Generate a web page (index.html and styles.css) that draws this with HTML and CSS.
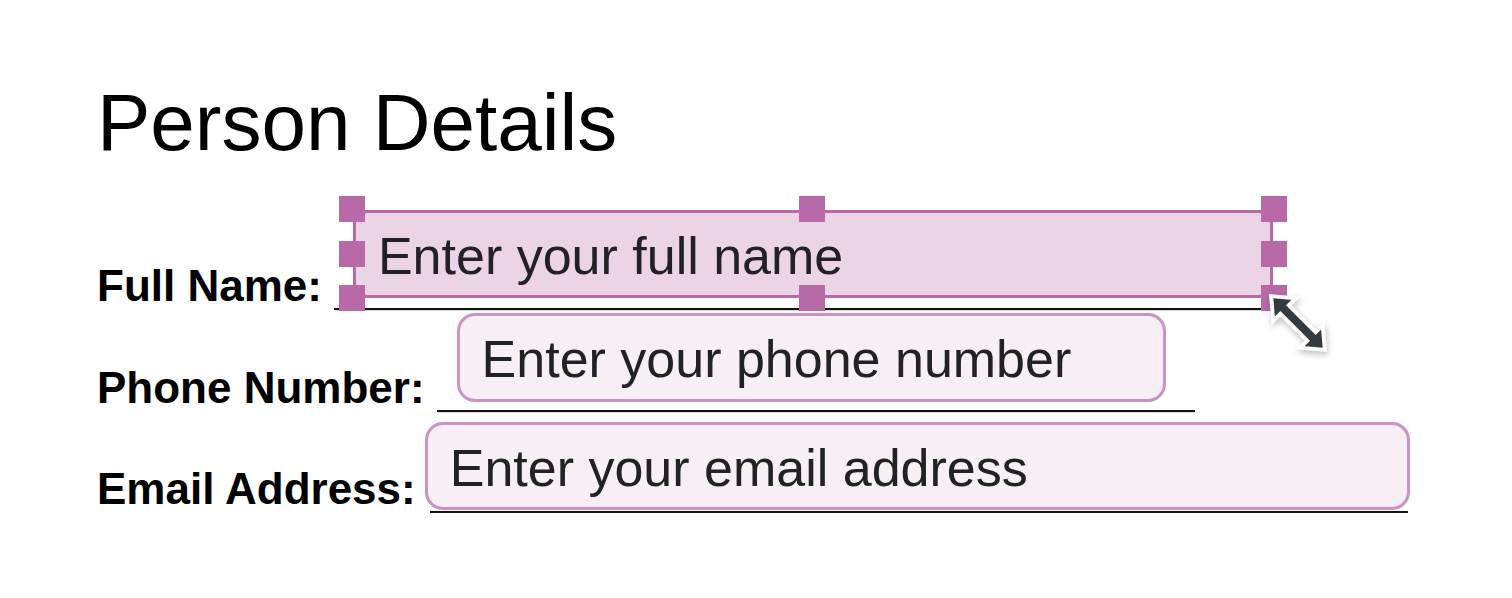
FILE: index.html
```html
<!DOCTYPE html>
<html>
<head>
    <link rel="stylesheet" href="styles.css">
</head>
<body>
    <div class="form">
        <h1 class="title">Person Details</h1>

        <div class="row row-name">
            <label class="label" for="fullName">Full Name:</label>
            <div class="field field-name">
                <div class="frame">
                    <input id="fullName" class="box box-selected" type="text" placeholder="Enter your full name">
                    <span class="handle h-tl"></span>
                    <span class="handle h-tm"></span>
                    <span class="handle h-tr"></span>
                    <span class="handle h-ml"></span>
                    <span class="handle h-mr"></span>
                    <span class="handle h-bl"></span>
                    <span class="handle h-bm"></span>
                    <span class="handle h-br"></span>
                    <svg class="resize-cursor" width="90" height="90" viewBox="0 0 90 90">
                        <polygon transform="translate(45 45) rotate(45)"
                            points="-38,0 -19,-16 -19,-6 19,-6 19,-16 38,0 19,16 19,6 -19,6 -19,16"
                            fill="#353a3e" stroke="#ffffff" stroke-width="4" stroke-linejoin="miter"/>
                    </svg>
                </div>
            </div>
        </div>

        <div class="row row-phone">
            <label class="label" for="phone">Phone Number:</label>
            <div class="field field-phone">
                <input id="phone" class="box" type="text" placeholder="Enter your phone number">
            </div>
        </div>

        <div class="row row-email">
            <label class="label" for="email">Email Address:</label>
            <div class="field field-email">
                <input id="email" class="box" type="text" placeholder="Enter your email address">
            </div>
        </div>
    </div>
</body>
</html>
```

FILE: styles.css
```css
body {
    margin: 0;
    background-color: #ffffff;
    color: #000000;
    font-family: "Liberation Sans", Arial, sans-serif;
    overflow: hidden;
}

.form {
    padding: 77px 0 0 97px;
}

.title {
    font-size: 80px;
    font-weight: normal;
    line-height: 91px;
    margin: 0 0 42px 0;
}

.row {
    display: flex;
    align-items: flex-end;
}

.row-phone {
    margin-top: 3px;
}

.row-email {
    margin-top: 10px;
}

.label {
    font-size: 44px;
    font-weight: bold;
    line-height: 48px;
}

.field {
    border-bottom: 2px solid #111111;
    box-shadow: 0 2px 0 -1px #d8d8d8;
}

.field-name {
    width: 927px;
    margin-left: 12px;
    padding-bottom: 10px;
}

.field-phone {
    width: 758px;
    margin-left: 12px;
    padding-bottom: 8px;
}

.field-email {
    width: 978px;
    margin-left: 14px;
    padding-bottom: 1px;
}

.box {
    display: block;
    box-sizing: border-box;
    height: 88px;
    padding: 3px 0 0 22px;
    border: 3px solid #cd92c3;
    border-radius: 18px;
    background-color: #f8eef5;
    color: #222226;
    font-family: "Liberation Sans", Arial, sans-serif;
    font-size: 52px;
    outline: none;
}

.box::placeholder {
    color: #222226;
    opacity: 1;
}

.field-phone .box {
    width: 709px;
    height: 89px;
    margin-left: 20px;
}

.field-email .box {
    width: 985px;
    margin-left: -5px;
}

/* selected element with its resize handles */
.frame {
    position: relative;
    width: 920px;
    margin-left: 19px;
}

.frame::before {
    content: "";
    position: absolute;
    inset: 0;
    border: 2px solid #b86aa8;
    pointer-events: none;
}

.box-selected {
    width: 100%;
    border-color: #b86aa8;
    border-radius: 15px;
    background-color: #ecd4e7;
}

.handle {
    position: absolute;
    width: 26px;
    height: 26px;
    background-color: #b86aa8;
}

.h-tl, .h-tm, .h-tr { top: -14px; }
.h-ml, .h-mr { top: 31px; }
.h-bl, .h-bm, .h-br { bottom: -13px; }
.h-tl, .h-ml, .h-bl { left: -14px; }
.h-tm, .h-bm { left: 446px; }
.h-tr, .h-mr, .h-br { right: -14px; }

.resize-cursor {
    position: absolute;
    left: 900px;
    top: 68px;
    filter: drop-shadow(1px 3px 3px rgba(0, 0, 0, 0.25));
}
```
